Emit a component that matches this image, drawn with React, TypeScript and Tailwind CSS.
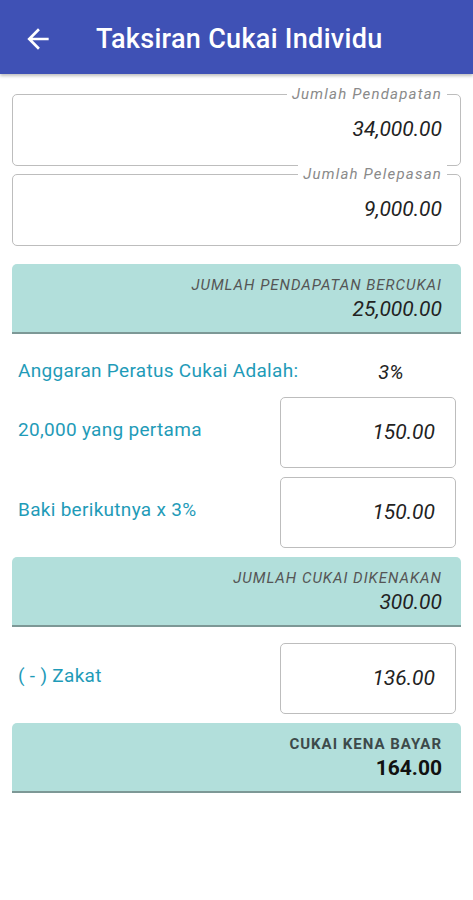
function BackArrow() {
  return (
    <svg width="32" height="32" viewBox="0 0 24 24" fill="white" aria-hidden="true">
      <path d="M20 11H7.83l5.59-5.59L12 4l-8 8 8 8 1.41-1.41L7.83 13H20v-2z" />
    </svg>
  );
}

function OutlinedField({ label, value }: { label: string; value: string }) {
  return (
    <div className="relative h-[72px] rounded-[5px] border-[1.5px] border-[#bdbdbd] flex items-center justify-end pr-[18px]">
      <span className="absolute -top-[12px] right-[13px] bg-white px-[5px] text-[15px] italic tracking-[1.2px] text-[#8a8a8a]">
        {label}
      </span>
      <span className="text-[21px] italic text-[#222]">{value}</span>
    </div>
  );
}

function SummaryPanel({ label, value, strong }: { label: string; value: string; strong?: boolean }) {
  return (
    <div className="h-[70px] rounded-t-[5px] bg-[#b2dfdb] border-b-2 border-[#7d9896] flex flex-col items-end justify-center pr-[19px] pt-[2px]">
      <span
        className={
          strong
            ? "text-[15px] leading-[20px] font-bold tracking-[1px] text-[#3d4a4a]"
            : "text-[15px] leading-[20px] italic tracking-[1px] text-[#555]"
        }
      >
        {label}
      </span>
      <span
        className={
          strong
            ? "text-[21px] leading-[28px] font-bold text-[#111]"
            : "text-[21px] leading-[28px] italic text-[#222]"
        }
      >
        {value}
      </span>
    </div>
  );
}

function InputRow({ label, value }: { label: string; value: string }) {
  return (
    <div className="flex items-center justify-between pl-[6px] pr-[5px]">
      <span className="text-[19px] tracking-[0.3px] text-[#1f9bb8] -mt-[4px]">{label}</span>
      <div className="w-[176px] h-[71px] rounded-[5px] border-[1.5px] border-[#bdbdbd] flex items-center justify-end pr-[20px]">
        <span className="text-[21px] italic text-[#222]">{value}</span>
      </div>
    </div>
  );
}

export default function App() {
  return (
    <div className="min-h-[900px] bg-white font-['Roboto',sans-serif]">
      <header className="h-[74px] bg-[#3f51b5] flex items-center pt-[4px] shadow-[0_2px_3px_rgba(0,0,0,0.25)]">
        <div className="ml-[22px]">
          <BackArrow />
        </div>
        <h1 className="ml-[42px] text-[27px] font-medium tracking-[0.3px] text-white">Taksiran Cukai Individu</h1>
      </header>

      <main className="px-[12px] pt-[20px]">
        <div className="flex flex-col gap-[8px]">
          <OutlinedField label="Jumlah Pendapatan" value="34,000.00" />
          <OutlinedField label="Jumlah Pelepasan" value="9,000.00" />
        </div>

        <div className="mt-[18px]">
          <SummaryPanel label="JUMLAH PENDAPATAN BERCUKAI" value="25,000.00" />
        </div>

        <div className="h-[63px] flex items-center pl-[6px] pt-[12px]">
          <span className="text-[19px] tracking-[0.3px] text-[#1f9bb8]">Anggaran Peratus Cukai Adalah:</span>
          <span className="ml-[80px] text-[20px] italic text-[#222]">3%</span>
        </div>

        <div className="flex flex-col gap-[9px]">
          <InputRow label="20,000 yang pertama" value="150.00" />
          <InputRow label="Baki berikutnya x 3%" value="150.00" />
        </div>

        <div className="mt-[9px]">
          <SummaryPanel label="JUMLAH CUKAI DIKENAKAN" value="300.00" />
        </div>

        <div className="mt-[16px]">
          <InputRow label="( - ) Zakat" value="136.00" />
        </div>

        <div className="mt-[9px]">
          <SummaryPanel label="CUKAI KENA BAYAR" value="164.00" strong />
        </div>
      </main>
    </div>
  );
}
